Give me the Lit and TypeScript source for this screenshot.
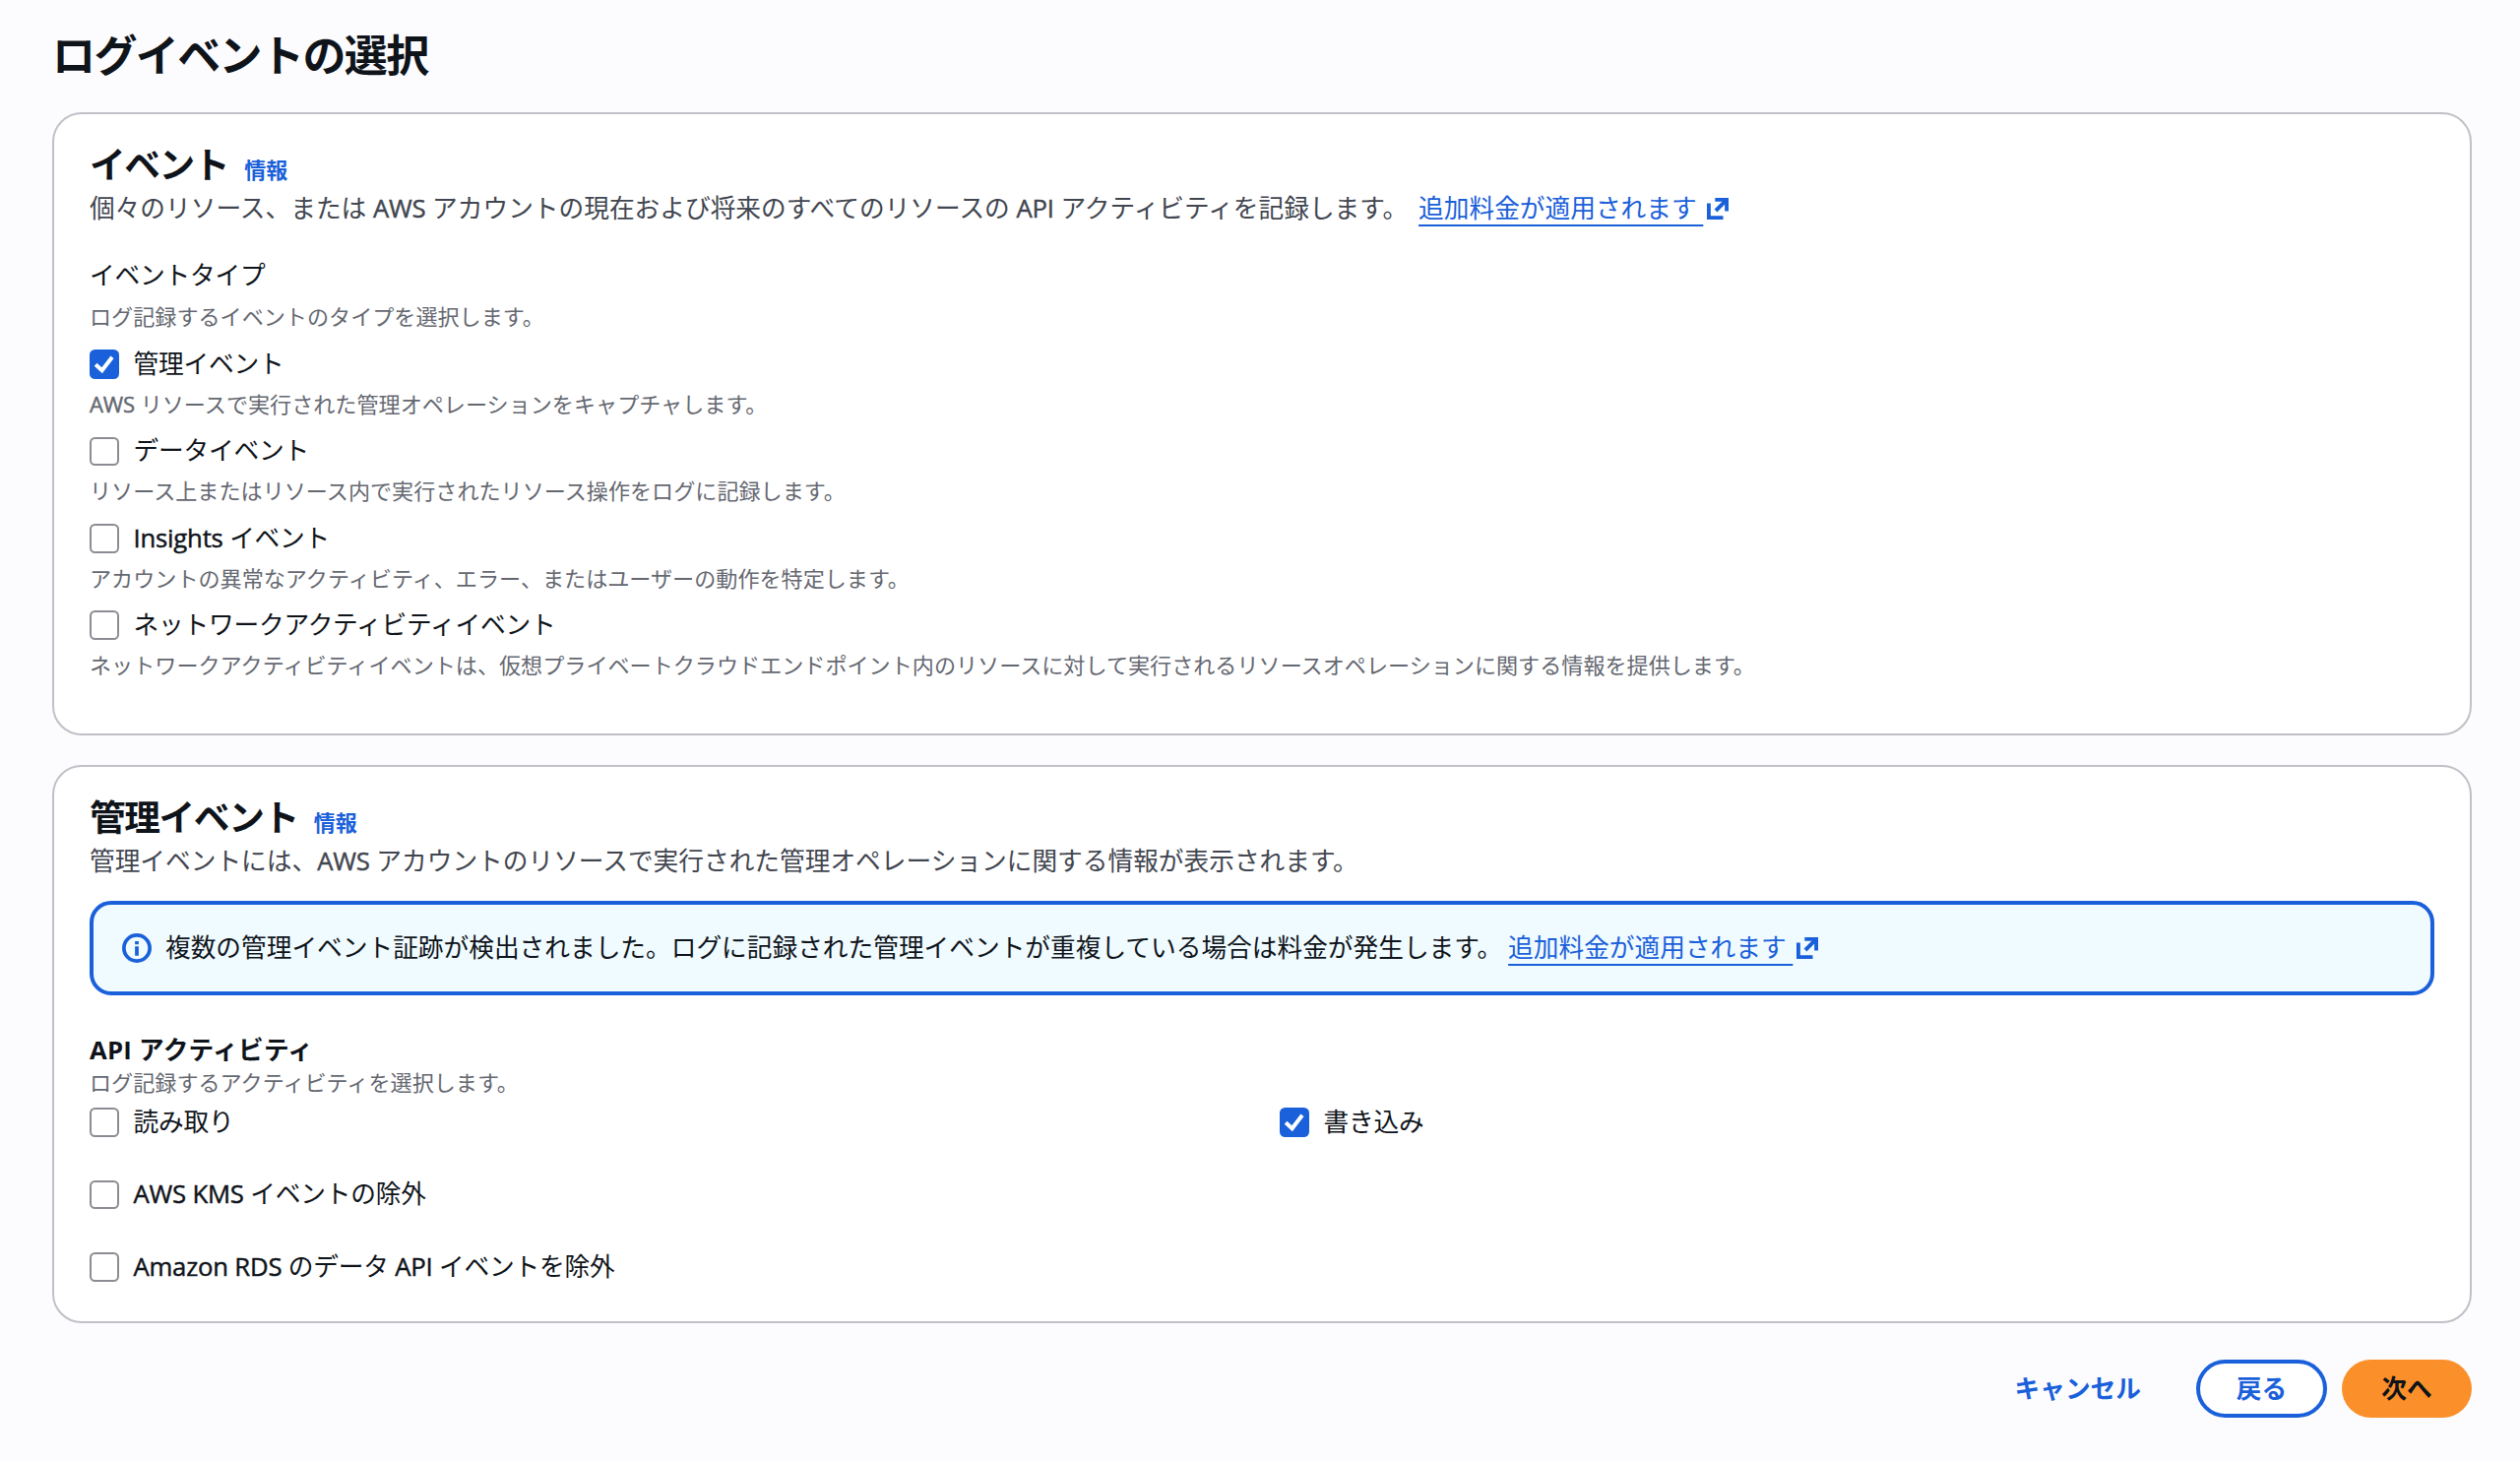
import { LitElement, html, css, svg, nothing } from "lit";
import { customElement, property } from "lit/decorators.js";

const fontStack = css`"Open Sans", "Noto Sans CJK JP", sans-serif`;

const latinStyle = css`.latin { -webkit-text-stroke: 0.45px currentColor; letter-spacing: -0.2px; }`;

/** Wraps Latin words so that they carry a slightly heavier stroke than the kana around them. */
const mixed = (text: string) =>
  text.split(/([A-Za-z]+(?: [A-Za-z]+)*)/).map((part, i) => (i % 2 ? html`<span class="latin">${part}</span>` : part));

const externalIcon = html`<svg class="ext" viewBox="0 0 22 22" fill="none" stroke="currentColor" stroke-width="3.9">
  ${svg`<path d="M8.3 1.9H20.1V13.5M20.1 1.9 9 13M1.9 5.5V20.1H16.5"></path>`}
</svg>`;

const infoIcon = html`<svg class="info-icon" viewBox="0 0 16 16" fill="none" stroke="currentColor" stroke-width="2">
  ${svg`<circle cx="8" cy="8" r="7"></circle><path d="M8 12.1V7M8 6V4.2"></path>`}
</svg>`;

@customElement("check-item")
class CheckItem extends LitElement {
  @property() label = "";
  @property() hint = "";
  @property({ type: Boolean }) checked = false;

  static styles = [latinStyle, css`
    :host { display: block; font-family: ${fontStack}; }
    .row { display: flex; align-items: center; gap: 15px; height: 30px; }
    .box { box-sizing: border-box; width: 29.5px; height: 29.5px; border: 2px solid #8c8c94; border-radius: 5.5px; background: #fff; flex: none; }
    .on { border: 0; background: #1a60da; }
    .box svg { display: block; width: 100%; height: 100%; }
    .label { font-size: 25.7px; line-height: 30px; letter-spacing: -0.2px; color: #0f141a; white-space: nowrap; }
    .hint { font-size: 22.1px; line-height: 30px; color: #656871; margin-top: 10px; white-space: nowrap; }
  `];

  render() {
    return html`
      <div class="row">
        <span class="box ${this.checked ? "on" : ""}">
          ${this.checked
            ? html`<svg viewBox="0 0 14 14" fill="none" stroke="#fff" stroke-width="1.9"><path d="M2.9 7.2 6 10.1 10.9 3.7"></path></svg>`
            : nothing}
        </span>
        <span class="label">${mixed(this.label)}</span>
      </div>
      ${this.hint ? html`<div class="hint">${mixed(this.hint)}</div>` : nothing}
    `;
  }
}

@customElement("app-root")
class AppRoot extends LitElement {
  static styles = [latinStyle, css`
    :host {
      display: block; box-sizing: border-box; height: 1485px; background: #fcfcfe;
      padding: 30px 49px 0 53px; font-family: ${fontStack}; color: #0f141a; font-size: 25.7px;
    }
    h1, h2, h3, p { margin: 0; white-space: nowrap; }
    h1 { font-size: 44px; line-height: 53px; font-weight: 700; letter-spacing: -1.6px; height: 84px; }
    .card { box-sizing: border-box; background: #fff; border: 2px solid #c0c0c8; border-radius: 30px; padding: 0 36px; }
    .events { height: 633px; padding-top: 29px; }
    .mgmt { height: 567px; margin-top: 30px; padding-top: 29px; }
    .head { display: flex; align-items: baseline; gap: 16px; height: 46.5px; }
    h2 { font-size: 36.7px; line-height: 44px; font-weight: 700; letter-spacing: -1.4px; }
    .info { font-size: 22px; font-weight: 700; color: #1a60da; }
    .desc { color: #424650; line-height: 40px; height: 40px; }
    .link { color: #1a60da; margin-left: 6px; }
    .desc .link { margin-left: 11px; }
    .link span { text-decoration: underline; text-decoration-thickness: 2px; text-underline-offset: 7px; text-decoration-skip-ink: none; }
    .ext { width: 22px; height: 22px; vertical-align: -2px; margin-left: 4px; }
    .type { line-height: 40px; margin-top: 28.5px; letter-spacing: -0.2px; }
    .hint { font-size: 22.1px; line-height: 30px; color: #656871; }
    .type-hint { margin-top: 6px; }
    .types { display: flex; flex-direction: column; gap: 18.4px; margin-top: 19px; }
    .alert {
      box-sizing: border-box; height: 96px; margin-top: 20px; border: 4px solid #1a60da; border-radius: 22px;
      background: #f0fbff; display: flex; align-items: center; padding: 0 29px; gap: 14px; white-space: nowrap;
    }
    .message { padding-bottom: 3px; }
    .info-icon { width: 30px; height: 30px; color: #1a60da; flex: none; }
    h3 { font-size: 25.7px; line-height: 35px; font-weight: 700; letter-spacing: 0.25px; margin-top: 38px; }
    .pair { display: grid; grid-template-columns: 1209px 1fr; margin-top: 11.3px; }
    .gap { margin-top: 43.7px; }
    .actions { display: flex; justify-content: flex-end; align-items: center; margin-top: 37px; font-weight: 700; }
    .btn { box-sizing: border-box; display: flex; align-items: center; justify-content: center; height: 59px; padding-bottom: 3px; border-radius: 30px; width: 133px; color: #1a60da; }
    .cancel { width: auto; margin-right: 56px; }
    .back { border: 4px solid #1a60da; background: #fff; }
    .next { width: 132px; background: #fb8f29; color: #0f141a; margin-left: 15px; }
  `];

  private feeLink() {
    return html`<span class="link"><span>追加料金が適用されます&nbsp;</span>${externalIcon}</span>`;
  }

  render() {
    return html`
      <h1>ログイベントの選択</h1>
      <section class="card events">
        <div class="head"><h2>イベント</h2><span class="info">情報</span></div>
        <p class="desc">${mixed("個々のリソース、または AWS アカウントの現在および将来のすべてのリソースの API アクティビティを記録します。")}${this.feeLink()}</p>
        <p class="type">イベントタイプ</p>
        <p class="hint type-hint">ログ記録するイベントのタイプを選択します。</p>
        <div class="types">
          <check-item checked label="管理イベント" hint="AWS リソースで実行された管理オペレーションをキャプチャします。"></check-item>
          <check-item label="データイベント" hint="リソース上またはリソース内で実行されたリソース操作をログに記録します。"></check-item>
          <check-item label="Insights イベント" hint="アカウントの異常なアクティビティ、エラー、またはユーザーの動作を特定します。"></check-item>
          <check-item label="ネットワークアクティビティイベント" hint="ネットワークアクティビティイベントは、仮想プライベートクラウドエンドポイント内のリソースに対して実行されるリソースオペレーションに関する情報を提供します。"></check-item>
        </div>
      </section>
      <section class="card mgmt">
        <div class="head"><h2>管理イベント</h2><span class="info">情報</span></div>
        <p class="desc">${mixed("管理イベントには、AWS アカウントのリソースで実行された管理オペレーションに関する情報が表示されます。")}</p>
        <div class="alert">
          ${infoIcon}
          <div class="message">複数の管理イベント証跡が検出されました。ログに記録された管理イベントが重複している場合は料金が発生します。${this.feeLink()}</div>
        </div>
        <h3>API アクティビティ</h3>
        <p class="hint">ログ記録するアクティビティを選択します。</p>
        <div class="pair">
          <check-item label="読み取り"></check-item>
          <check-item checked label="書き込み"></check-item>
        </div>
        <check-item class="gap" label="AWS KMS イベントの除外"></check-item>
        <check-item class="gap" label="Amazon RDS のデータ API イベントを除外"></check-item>
      </section>
      <div class="actions">
        <div class="btn cancel">キャンセル</div>
        <div class="btn back">戻る</div>
        <div class="btn next">次へ</div>
      </div>
    `;
  }
}
